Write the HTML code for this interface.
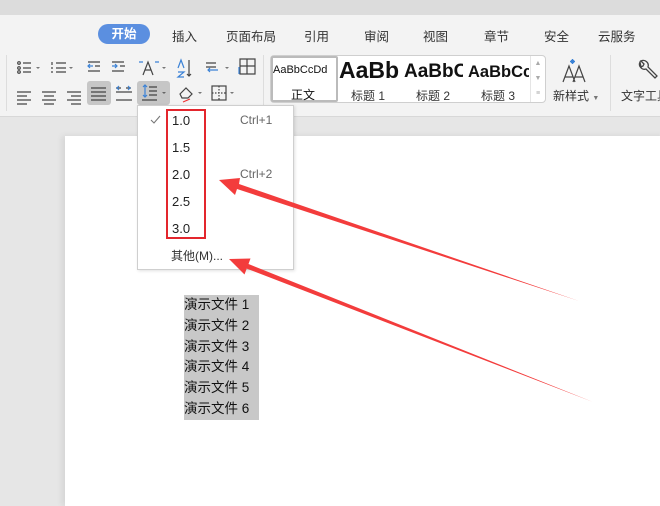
<!DOCTYPE html>
<html><head><meta charset="utf-8">
<style>
*{margin:0;padding:0;box-sizing:border-box}
body{width:660px;height:503px;overflow:hidden;position:relative;background:#e6e6e6;font-family:"Liberation Sans","Noto Sans CJK SC",sans-serif;color:#333}
.a{position:absolute}
.tab{position:absolute;top:26px;font-size:12.5px;color:#333}
.ico{position:absolute}
</style></head><body>
<div class="a" style="left:0;top:0;width:660px;height:15px;background:#dcdcdc"></div>
<div class="a" style="left:0;top:15px;width:660px;height:102px;background:#f3f3f3;border-bottom:1px solid #d8d8d8"></div>
<div class="a" style="left:98px;top:24px;width:52px;height:20px;border-radius:10px;background:#5b8fe0;color:#fff;font-size:12.5px;font-weight:bold;text-align:center;line-height:20px">开始</div>
<div class="tab" style="left:172px">插入</div>
<div class="tab" style="left:226px">页面布局</div>
<div class="tab" style="left:304px">引用</div>
<div class="tab" style="left:364px">审阅</div>
<div class="tab" style="left:423px">视图</div>
<div class="tab" style="left:484px">章节</div>
<div class="tab" style="left:544px">安全</div>
<div class="tab" style="left:598px">云服务</div>
<div class="a" style="left:6px;top:55px;width:1px;height:56px;background:#ddd"></div>
<div class="a" style="left:263px;top:55px;width:1px;height:56px;background:#ddd"></div>
<div class="a" style="left:610px;top:55px;width:1px;height:56px;background:#ddd"></div>
<svg class="ico" style="left:0;top:50px" width="270" height="60" fill="none" stroke="#444" stroke-width="1.2">
<g><circle cx="19" cy="13" r="1.3"/><circle cx="19" cy="18" r="1.3"/><circle cx="19" cy="22" r="1.3"/><path d="M23 13h8M23 18h8M23 22h8"/><path d="M36 17h4l-2 2z" fill="#777" stroke="none"/></g>
<g><path d="M56 13h10M56 18h10M56 22h10M52 12v3M51 18h2M51 22h2"/><path d="M69 17h4l-2 2z" fill="#777" stroke="none"/></g>
<g stroke="#3b82d6"><path d="M88 16h5M90 14l-2 2 2 2"/></g><path d="M88 12h12M95 16h5M88 21h12"/>
<g stroke="#3b82d6"><path d="M112 16h5M115 14l2 2-2 2"/></g><path d="M112 12h12M120 16h5M112 21h12"/>
<path d="M143 25l5-13 5 13M145 20h6"/><path d="M139 12h4M155 12h4" stroke="#3b82d6"/><path d="M162 17h4l-2 2z" fill="#777" stroke="none"/>
<path d="M178 18l3-8 3 8" stroke="#3b82d6"/><path d="M178 22h6l-6 5h6" stroke="#3b82d6"/><path d="M189 10v16M187 24l2 2 2-2"/>
<path d="M206 13h10M206 17h10" /><path d="M218 20h-10M210 18l-2 2 2 2" stroke="#3b82d6"/><path d="M225 17h4l-2 2z" fill="#777" stroke="none"/>
<path d="M240 9h15v15h-15zM247 9v15M240 16h15"/><path d="M239 17v7" stroke="#3b82d6"/>
<path d="M17 42h14M17 46h10M17 50h14M17 54h10"/>
<path d="M42 42h14M44 46h10M42 50h14M44 54h10"/>
<path d="M67 42h14M71 46h10M67 50h14M71 54h10"/>
<rect x="87" y="31" width="24" height="24" rx="3" fill="#c6c6c6" stroke="none"/>
<path d="M91 38h15M91 42h15M91 46h15M91 50h15"/>
<path d="M116 38h5M126 38h5M116 50h16M116 42h16" /><path d="M119 36l-2 2 2 2M128 36l2 2-2 2" stroke="#3b82d6"/>
<rect x="137" y="31" width="33" height="24" rx="3" fill="#c6c6c6" stroke="none"/>
<path d="M145 35v12M143 37l2-2 2 2M143 45l2 2 2-2" stroke="#3b82d6"/><path d="M149 37h8M149 41h8M149 45h8M142 50h15"/><path d="M162 42h4l-2 2z" fill="#666" stroke="none"/>
<path d="M180 44l6-6 6 6-4 4-6 0z"/><path d="M183 52l7-3" stroke="#e33"/><path d="M198 42h4l-2 2z" fill="#777" stroke="none"/>
<rect x="212" y="36" width="14" height="14"/><path d="M219 36v14M212 43h14" stroke-dasharray="1.5 1.5"/><path d="M230 42h4l-2 2z" fill="#777" stroke="none"/>
</svg>
<div class="a" style="left:270px;top:55px;width:276px;height:48px;background:#fff;border:1px solid #cfcfcf;border-radius:4px"></div>
<div class="a" style="left:271px;top:56px;width:67px;height:46px;border:2px solid #bbb;border-radius:2px"></div>
<div class="a" style="left:273px;top:64px;font-size:11px;color:#111">AaBbCcDd</div>
<div class="a" style="left:291px;top:86px;font-size:12px;color:#111">正文</div>
<div class="a" style="left:339px;top:57px;width:62px;overflow:hidden;font-size:23px;font-weight:bold;color:#111;white-space:nowrap">AaBb</div>
<div class="a" style="left:351px;top:87px;font-size:12px;color:#333">标题 1</div>
<div class="a" style="left:404px;top:61px;width:59px;overflow:hidden;font-size:19px;font-weight:bold;color:#111;white-space:nowrap">AaBbC</div>
<div class="a" style="left:416px;top:87px;font-size:12px;color:#333">标题 2</div>
<div class="a" style="left:468px;top:63px;width:61px;overflow:hidden;font-size:16.5px;font-weight:bold;color:#111;white-space:nowrap">AaBbCc</div>
<div class="a" style="left:481px;top:87px;font-size:12px;color:#333">标题 3</div>
<div class="a" style="left:530px;top:56px;width:15px;height:46px;border-left:1px solid #e5e5e5;font-size:7px;color:#aaa;text-align:center;line-height:15px">▲<br>▼<br>≡</div>
<svg class="ico" style="left:560px;top:58px" width="40" height="26" fill="none" stroke="#444" stroke-width="1.2"><path d="M3 24l6-16 6 16M5 19h8M13 24l6-16 6 16M15 19h8"/><path d="M11 2l3 3M14 2l-3 3M12.5 1v5M10 3.5h5" stroke="#3b82d6"/></svg>
<div class="a" style="left:553px;top:87px;font-size:12px;color:#333">新样式 <span style="font-size:7px;color:#777">▼</span></div>
<svg class="ico" style="left:636px;top:58px" width="24" height="26" fill="none" stroke="#444" stroke-width="1.3"><path d="M4 4a5 5 0 0 0 6 7l9 9 2-2-9-9a5 5 0 0 0-7-6l3 3-1 2-2 1z"/></svg>
<div class="a" style="left:621px;top:87px;font-size:12px;color:#333;white-space:nowrap">文字工具</div>
<div class="a" style="left:65px;top:136px;width:600px;height:370px;background:#fff;box-shadow:-3px 0 6px rgba(0,0,0,.08)"></div>
<div class="a" style="left:184px;top:295px;width:75px;height:125px;background:#c8c8c8"></div>
<div class="a" style="left:184px;top:295px;font-size:13.5px;line-height:20.8px;color:#111">演示文件 1<br>演示文件 2<br>演示文件 3<br>演示文件 4<br>演示文件 5<br>演示文件 6</div>
<div class="a" style="left:137px;top:105px;width:157px;height:165px;background:#fff;border:1px solid #cfcfcf;box-shadow:1px 1px 3px rgba(0,0,0,.12)"></div>
<svg class="ico" style="left:150px;top:115px" width="14" height="10" fill="none" stroke="#777" stroke-width="1.1"><path d="M1 5l3 3 6-7"/></svg>
<div class="a" style="left:172px;top:107px;font-size:13px;line-height:27px;color:#222">1.0<br>1.5<br>2.0<br>2.5<br>3.0</div>
<div class="a" style="left:240px;top:113px;font-size:12px;color:#666">Ctrl+1</div>
<div class="a" style="left:240px;top:167px;font-size:12px;color:#666">Ctrl+2</div>
<div class="a" style="left:166px;top:109px;width:40px;height:130px;border:2px solid #e3262d"></div>
<div class="a" style="left:171px;top:247px;font-size:12px;color:#333">其他(M)...</div>
<svg class="a" style="left:0;top:0" width="660" height="503"><polygon points="579,301 239,184 240,178 219,180 235,195 237,189" fill="#f33c3c"/><polygon points="593,402 248.5,264 250.5,258.5 229,259 244.5,274.5 246.7,268.6" fill="#f33c3c"/></svg>
</body></html>
